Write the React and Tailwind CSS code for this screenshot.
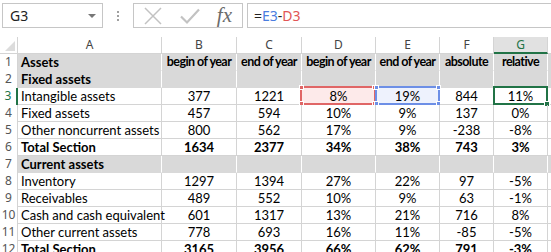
import React from "react";

const cols = [
  { key: "A", w: "w-[144px]" },
  { key: "B", w: "w-[75px]" },
  { key: "C", w: "w-[65px]" },
  { key: "D", w: "w-[74px]" },
  { key: "E", w: "w-[64px]" },
  { key: "F", w: "w-[54px]" },
  { key: "G", w: "w-[54px]" },
];

const rows = [
  { n: 1, fill: true, bold: true, head: true, cells: ["Assets", "begin of year", "end of year", "begin of year", "end of year", "absolute", "relative"] },
  { n: 2, fill: true, bold: true, cells: ["Fixed assets", "", "", "", "", "", ""] },
  { n: 3, cells: ["Intangible assets", "377", "1221", "8%", "19%", "844", "11%"] },
  { n: 4, cells: ["Fixed assets", "457", "594", "10%", "9%", "137", "0%"] },
  { n: 5, cells: ["Other noncurrent assets", "800", "562", "17%", "9%", "-238", "-8%"] },
  { n: 6, bold: true, cells: ["Total Section", "1634", "2377", "34%", "38%", "743", "3%"] },
  { n: 7, fill: true, bold: true, cells: ["Current assets", "", "", "", "", "", ""] },
  { n: 8, cells: ["Inventory", "1297", "1394", "27%", "22%", "97", "-5%"] },
  { n: 9, cells: ["Receivables", "489", "552", "10%", "9%", "63", "-1%"] },
  { n: 10, cells: ["Cash and cash equivalent", "601", "1317", "13%", "21%", "716", "8%"] },
  { n: 11, cells: ["Other current assets", "778", "693", "16%", "11%", "-85", "-5%"] },
  { n: 12, bold: true, cells: ["Total Section", "3165", "3956", "66%", "62%", "791", "-3%"] },
];

function Handle({ className }) {
  return <span className={"absolute w-[5px] h-[5px] border border-white " + className} />;
}

function FormulaBar() {
  return (
    <div className="flex h-[37px] pt-[3px] items-start font-['Noto_Sans',sans-serif]">
      <div className="ml-[2px] w-[101px] h-[25px] border border-[#c6c6c6] flex items-center justify-between pl-[7px] pr-[6px]">
        <span className="text-[14px] text-[#222]">G3</span>
        <span className="w-0 h-0 border-l-[4px] border-r-[4px] border-t-[4px] border-l-transparent border-r-transparent border-t-[#777]" />
      </div>
      <div className="w-[30px] h-[25px] flex flex-col items-center justify-center gap-[2px]">
        <span className="w-[2px] h-[2px] bg-[#a0a0a0]" />
        <span className="w-[2px] h-[2px] bg-[#a0a0a0]" />
        <span className="w-[2px] h-[2px] bg-[#a0a0a0]" />
      </div>
      <div className="w-[110px] h-[25px] border border-[#c6c6c6] flex items-center justify-between pl-[9px] pr-[10px]">
        <svg width="20" height="20" viewBox="0 0 20 20">
          <path d="M2 2 L18 18 M18 2 L2 18" stroke="#c2c2c2" strokeWidth="1.5" fill="none" />
        </svg>
        <svg width="22" height="20" viewBox="0 0 22 20">
          <path d="M2 10.5 L8 16.5 L20 3.5" stroke="#c2c2c2" strokeWidth="2.2" fill="none" />
        </svg>
        <span className="font-['Liberation_Serif',serif] italic text-[21px] leading-none text-[#6b6b6b]">fx</span>
      </div>
      <div className="ml-[4px] flex-1 h-[25px] border-y border-l border-[#c6c6c6] flex items-center pl-[6px] text-[14px] font-['Noto_Sans',sans-serif]">
        <span className="text-[#222]">=</span>
        <span className="text-[#4a7de0]">E3</span>
        <span className="text-[#222]">-</span>
        <span className="text-[#e25555]">D3</span>
      </div>
    </div>
  );
}

function HeaderRow() {
  return (
    <div className="flex h-[17px] font-['Noto_Sans',sans-serif] text-[12px] leading-[16px] text-[#444]">
      <div className="w-[18px] border-r border-b border-[#d4d4d4] relative">
        <svg className="absolute right-[2px] bottom-[2px]" width="10" height="10" viewBox="0 0 10 10">
          <path d="M10 0 L10 10 L0 10 Z" fill="#dcdcdc" />
        </svg>
      </div>
      {cols.map((c) =>
        c.key === "G" ? (
          <div key={c.key} className={c.w + " text-center bg-[#e1e1e1] border-r border-[#d4d4d4] border-b-2 border-b-[#217346] text-[#217346]"}>
            {c.key}
          </div>
        ) : (
          <div key={c.key} className={c.w + " text-center border-r border-b border-[#d4d4d4]"}>
            {c.key}
          </div>
        )
      )}
      <div className="flex-1 border-b border-[#d4d4d4]" />
    </div>
  );
}

function Row({ r }) {
  const selected = r.n === 3;
  return (
    <div className="flex h-[17px] text-[13px] leading-[16px] font-['Lato',sans-serif] text-black">
      <div
        className={
          "w-[18px] text-center font-['Noto_Sans',sans-serif] text-[12px] " +
          (selected ? "text-[#217346] border-r-2 border-[#217346]" : "text-[#555] border-r border-[#d4d4d4]")
        }
      >
        {r.n}
      </div>
      {cols.map((c, i) => {
        const text = r.cells[i];
        const cls =
          c.w +
          " relative border-r border-b whitespace-nowrap overflow-visible " +
          (r.fill ? "bg-[#d9d9d9] border-r-white border-b-[#d9d9d9] " : "border-[#d4d4d4] ") +
          (r.bold ? "font-bold " : "") +
          (r.head && i > 0 ? "text-[12.5px] tracking-[-0.55px] " : "") +
          (i === 0 ? "pl-[3px] text-left" : "text-center");
        return (
          <div key={c.key} className={cls}>
            {selected && c.key === "D" && (
              <div className="absolute -left-[2px] -top-[2px] w-[76px] h-[19px] border-2 border-[#e06666] bg-[#fdeaea]">
                <Handle className="-left-[3px] -top-[3px] bg-[#e06666]" />
                <Handle className="-right-[3px] -top-[3px] bg-[#e06666]" />
                <Handle className="-left-[3px] -bottom-[3px] bg-[#e06666]" />
                <Handle className="-right-[3px] -bottom-[3px] bg-[#e06666]" />
              </div>
            )}
            {selected && c.key === "E" && (
              <div className="absolute -left-[1px] -top-[2px] w-[65px] h-[19px] border-2 border-[#6d8fe6] bg-[#eef2fd]">
                <Handle className="-left-[3px] -top-[3px] bg-[#6d8fe6]" />
                <Handle className="-right-[3px] -top-[3px] bg-[#6d8fe6]" />
                <Handle className="-left-[3px] -bottom-[3px] bg-[#6d8fe6]" />
                <Handle className="-right-[3px] -bottom-[3px] bg-[#6d8fe6]" />
              </div>
            )}
            {selected && c.key === "G" && (
              <div className="absolute -left-[1px] -top-[2px] w-[55px] h-[19px] border-2 border-[#217346]">
                <span className="absolute -right-[4px] -bottom-[4px] w-[6px] h-[6px] bg-[#217346] border border-white" />
              </div>
            )}
            <span className="relative">{text}</span>
          </div>
        );
      })}
      <div className={"flex-1 border-b " + (r.fill ? "bg-[#d9d9d9] border-[#d9d9d9]" : "border-[#d4d4d4]")} />
    </div>
  );
}

export default function App() {
  return (
    <div className="w-[551px] h-[252px] overflow-hidden bg-white">
      <FormulaBar />
      <HeaderRow />
      {rows.map((r) => (
        <Row key={r.n} r={r} />
      ))}
    </div>
  );
}
